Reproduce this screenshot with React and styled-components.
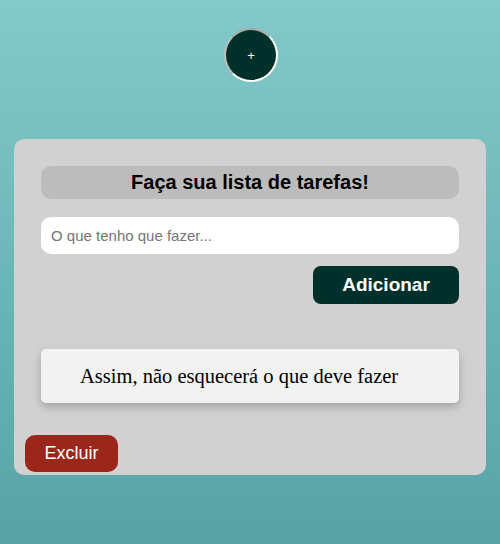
import React from 'react';
import styled, { createGlobalStyle } from 'styled-components';

const GlobalStyle = createGlobalStyle`
  html, body {
    margin: 0;
    padding: 0;
    min-height: 100%;
  }
  body {
    background: linear-gradient(180deg, #84c9c9 0%, #56a3a6 100%);
    min-height: 544px;
    font-family: "Liberation Sans", Arial, sans-serif;
  }
`;

const Page = styled.main`
  display: flex;
  flex-direction: column;
  align-items: center;
  padding-top: 28px;
  height: 544px;
  box-sizing: border-box;
`;

const AddCircle = styled.button`
  width: 54px;
  height: 54px;
  border-radius: 50%;
  background: #00302a;
  color: #fff;
  border: 2px solid #fff;
  border-top-color: #a9a9a9;
  border-left-color: #bdbdbd;
  font-family: "Liberation Sans", Arial, sans-serif;
  font-size: 13px;
  padding: 0;
  margin-left: 2px;
  cursor: pointer;
`;

const Card = styled.section`
  margin-top: 57px;
  width: 472px;
  height: 336px;
  box-sizing: border-box;
  background: #d1d1d1;
  border-radius: 10px;
  padding: 27px 27px 3px 27px;
  display: flex;
  flex-direction: column;
`;

const Title = styled.h1`
  margin: 0;
  height: 33px;
  background: #bcbcbc;
  border-radius: 10px;
  font-size: 20px;
  font-weight: bold;
  color: #000;
  display: flex;
  align-items: center;
  justify-content: center;
`;

const Input = styled.input`
  margin-top: 18px;
  height: 37px;
  box-sizing: border-box;
  border: none;
  border-radius: 10px;
  background: #fff;
  padding: 0 10px;
  font-family: "Liberation Sans", Arial, sans-serif;
  font-size: 15px;
  outline: none;
  &::placeholder {
    color: #757575;
  }
`;

const Actions = styled.div`
  display: flex;
  justify-content: flex-end;
  margin-top: 12px;
`;

const Button = styled.button`
  border: none;
  color: #fff;
  font-family: "Liberation Sans", Arial, sans-serif;
  cursor: pointer;
  background: ${({ $variant }) => ($variant === 'danger' ? '#9b271b' : '#00302a')};
  font-size: ${({ $variant }) => ($variant === 'danger' ? '18px' : '19px')};
  font-weight: ${({ $variant }) => ($variant === 'danger' ? 'normal' : 'bold')};
  border-radius: ${({ $variant }) => ($variant === 'danger' ? '10px' : '8px')};
  height: ${({ $variant }) => ($variant === 'danger' ? '37px' : '38px')};
  width: ${({ $variant }) => ($variant === 'danger' ? '93px' : '146px')};
`;

const TaskList = styled.ul`
  list-style: none;
  margin: 45px 0 0 0;
  padding: 0;
`;

const TaskItem = styled.li`
  height: 54px;
  background: #f2f2f2;
  border-radius: 5px;
  box-shadow: 0 4px 8px rgba(0, 0, 0, 0.22);
  display: flex;
  align-items: center;
  padding-left: 39px;
  font-family: "Liberation Serif", "Times New Roman", serif;
  font-size: 20.5px;
  color: #000;
`;

const Footer = styled.div`
  margin-top: auto;
  margin-left: -16px;
`;

export default function App() {
  return (
    <>
      <GlobalStyle />
      <Page>
        <AddCircle>+</AddCircle>
        <Card>
          <Title>Faça sua lista de tarefas!</Title>
          <Input placeholder="O que tenho que fazer..." autoFocus />
          <Actions>
            <Button>Adicionar</Button>
          </Actions>
          <TaskList>
            <TaskItem>Assim, não esquecerá o que deve fazer</TaskItem>
          </TaskList>
          <Footer>
            <Button $variant="danger">Excluir</Button>
          </Footer>
        </Card>
      </Page>
    </>
  );
}
